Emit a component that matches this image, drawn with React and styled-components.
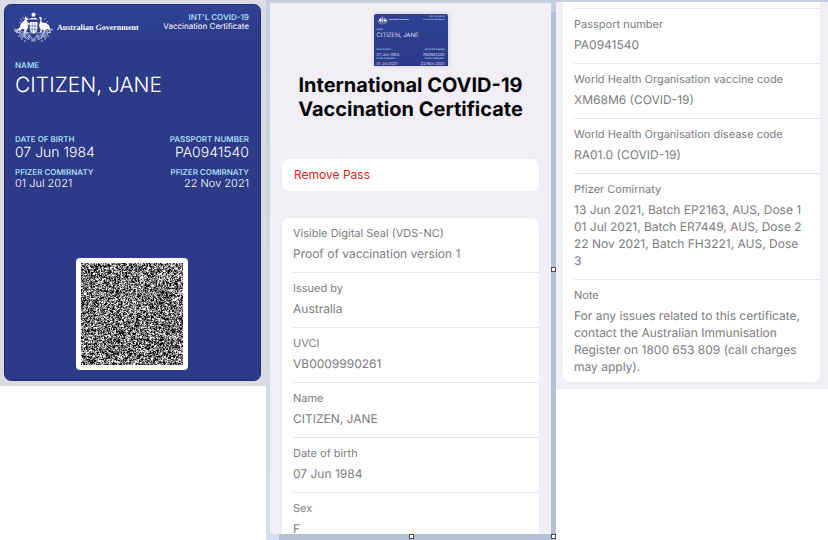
import React from "react";
import styled, { createGlobalStyle, css } from "styled-components";

const GlobalStyle = createGlobalStyle`
  * {
    box-sizing: border-box;
  }
  body {
    margin: 0;
    background: #ffffff;
    font-family: Inter, "Liberation Sans", sans-serif;
    text-rendering: geometricPrecision;
  }
  h1, dl, dd, p {
    margin: 0;
  }
`;

const Page = styled.main`
  display: grid;
  grid-template-columns: 266fr 290fr 272fr;
  align-items: start;
  height: 100vh;
  overflow: hidden;
`;

const PassPanel = styled.section`
  padding: 4px 5px 5px 4px;
  background: #dddbe2;
`;

const Pass = styled.article`
  display: flex;
  flex-direction: column;
  padding: 7px 11px 10px 10px;
  border: 1px solid #202b73;
  border-radius: 7px;
  background: linear-gradient(#2f4194, #2c3a88 48px);
  color: #ffffff;

  ${({ $mini }) => $mini && css`
    width: 74px;
    height: 52px;
    padding: 2px 3px 0;
    border: none;
    border-radius: 2px 2px 0 0;
    overflow: hidden;
    box-shadow: 0 0 4px #c9c7d2;
  `}
`;

const PassHeader = styled.header`
  display: flex;
  align-items: flex-start;
  height: ${({ $mini }) => ($mini ? "15px" : "48px")};
`;

const Crest = styled.svg`
  flex: none;
  width: ${({ $mini }) => ($mini ? "11px" : "41px")};
  height: ${({ $mini }) => ($mini ? "9px" : "30px")};
  margin-left: ${({ $mini }) => ($mini ? "0" : "-2px")};
`;

const Issuer = styled.span`
  flex: 1;
  margin-left: ${({ $mini }) => ($mini ? "1px" : "3px")};
  font: 700 8px/32px "Liberation Serif", serif;
  white-space: nowrap;

  ${({ $mini }) => $mini && css`
    font-size: 2px;
    line-height: 9px;
  `}
`;

const PassTitle = styled.div`
  display: flex;
  flex-direction: column;
  text-align: right;
  font-size: ${({ $mini }) => ($mini ? "2px" : "8px")};
  line-height: ${({ $mini }) => ($mini ? "3px" : "9px")};
  white-space: nowrap;
`;

const FieldRow = styled.div`
  display: flex;
  justify-content: space-between;
  margin-bottom: ${({ $gap = 0 }) => $gap}px;
`;

const Caption = styled.span`
  color: #a9dcf5;
  font-size: ${({ $mini }) => ($mini ? "2px" : "8px")};
  font-weight: 600;
  line-height: ${({ $mini }) => ($mini ? "3px" : "10px")};
`;

const fieldSizes = {
  large: css`
    font-size: 21px;
    line-height: 32px;
  `,
  medium: css`
    font-size: 14px;
    line-height: 17px;
  `,
  small: css`
    font-size: 11px;
    line-height: 12px;
  `,
  miniLarge: css`
    font-size: 6px;
    line-height: 7px;
  `,
  mini: css`
    font-size: 4px;
    line-height: 5px;
  `,
};

const Field = styled.div`
  display: flex;
  flex-direction: column;
  text-align: ${({ $right }) => ($right ? "right" : "left")};

  strong {
    font-weight: 300;
    white-space: nowrap;
    ${({ $size }) => fieldSizes[$size]}
  }
`;

const CodeBox = styled.svg`
  align-self: center;
  width: 112px;
  height: 112px;
  margin-top: 69px;
  padding: 5px;
  border-radius: 4px;
  background: #ffffff;
`;

const Frame = styled.section`
  position: relative;
  height: 100vh;
  padding: 3px 5px 6px 4px;
  background: linear-gradient(#c5cfe1, #d6e1ef);
  overflow: hidden;
`;

const Sheet = styled.div`
  display: flex;
  flex-direction: column;
  height: 100%;
  padding: 11px 12px 0;
  background: #f1eef6;
  box-shadow: 9px 9px 0 #b3c0d5;
  overflow: hidden;
`;

const Thumb = styled.div`
  align-self: center;
`;

const Title = styled.h1`
  margin: 7px 0 38px;
  font-size: 20px;
  font-weight: 700;
  line-height: 24px;
  text-align: center;
  color: #050505;
`;

const RemoveButton = styled.button`
  flex: none;
  height: 32px;
  margin-bottom: 27px;
  padding: 0 12px;
  border: none;
  border-radius: 7px;
  background: #ffffff;
  color: #e2231a;
  font: 400 12px/16px Inter, sans-serif;
  text-align: left;
  cursor: pointer;
`;

const Details = styled.dl`
  flex: none;
  padding-left: 11px;
  border-radius: ${({ $continued }) => ($continued ? "0 0 7px 7px" : "7px 7px 0 0")};
  background: #ffffff;
`;

const DetailRow = styled.div`
  padding: 8px 12px 10px 0;
  border-bottom: 1px solid #e6e6e8;
  color: #7c7c80;

  &:last-child {
    padding-bottom: 7px;
    border-bottom: none;
  }

  dt {
    margin-bottom: 4px;
    font-size: 11px;
    line-height: 15px;
  }

  dd {
    font-size: 12px;
    line-height: 17px;
  }
`;

const RowEnd = styled.div`
  height: 7px;
  border-bottom: 1px solid #e6e6e8;
`;

const BackPanel = styled.section`
  padding: 0 8px 7px 7px;
  border-top: 2px solid #c5cfe1;
  background: #f1eef6;
`;

const Handle = styled.i`
  position: absolute;
  width: 5px;
  height: 5px;
  border: 1px solid #4a4a4a;
  background: #ffffff;
`;

const RightHandle = styled(Handle)`
  top: calc(50% - 3px);
  right: 0;
`;

const BottomHandle = styled(Handle)`
  bottom: 1px;
  left: calc(50% - 2px);
`;

const CornerHandle = styled(Handle)`
  right: 0;
  bottom: 1px;
`;

const CODE_SIZE = 137;

const getCodePath = () => {
  let seed = 20211;
  let path = "";
  for (let y = 0; y < CODE_SIZE; y++) {
    for (let x = 0; x < CODE_SIZE; x++) {
      seed = (seed * 16807) % 2147483647;
      if (seed / 2147483647 < 0.54) {
        path += `M${x} ${y}h1v1h-1z`;
      }
    }
  }
  return path;
};

const codePath = getCodePath();

const front = [
  { label: "Visible Digital Seal (VDS-NC)", value: "Proof of vaccination version 1" },
  { label: "Issued by", value: "Australia" },
  { label: "UVCI", value: "VB0009990261" },
  { label: "Name", value: "CITIZEN, JANE" },
  { label: "Date of birth", value: "07 Jun 1984" },
  { label: "Sex", value: "F" },
];

const back = [
  { label: "Passport number", value: "PA0941540" },
  { label: "World Health Organisation vaccine code", value: "XM68M6 (COVID-19)" },
  { label: "World Health Organisation disease code", value: "RA01.0 (COVID-19)" },
  {
    label: "Pfizer Comirnaty",
    value: [
      "13 Jun 2021, Batch EP2163, AUS, Dose 1",
      "01 Jul 2021, Batch ER7449, AUS, Dose 2",
      "22 Nov 2021, Batch FH3221, AUS, Dose 3",
    ],
  },
  {
    label: "Note",
    value:
      "For any issues related to this certificate, contact the Australian Immunisation Register on 1800 653 809 (call charges may apply).",
  },
];

const CoatOfArms = ({ mini }) => (
  <Crest $mini={mini} viewBox="0 0 41 30" aria-label="Coat of arms" role="img">
    <g fill="#ffffff">
      <path d="M20.5 0l.6 1.3 1.4-.4-.5 1.4 1.2.8-1.4.5.1 1.4-1.4-.8-1.4.8.1-1.4-1.4-.5 1.2-.8-.5-1.4 1.4.4z" />
      <path d="M17.3 6h6.4v1.4h-6.4z" />
      {/* kangaroo */}
      <path d="M12.4 4.2l1.2 1.5 1.8.8.2.9-1.8.6c.2 1.8 1 2.9 2.7 3.5l1.4-.5.2.9-2 .8-1.3-.2.3 3.6-1.6 1.8-.4 2.5h2.2v1h-4.3l.4-3.8-2.2-.6-2 .9-3.8 1.9-2.4.2 3.8-2 1.9-2.5c.7-3.2 2-5.8 4.8-7.1l.2-2.2z" />
      {/* emu */}
      <path d="M25.8 5.7l1.2-.9 1.3.4.5 1.2-.6 2.7 1.2 1.7c2.5-.6 5.4.4 6.8 2.9l1.4 4.5-2.6-1.1-2.6.6-.8 3.3h-1.1l.4-3.1-1.8-.3-1.2 3.4h-1.2l1-4c-1.7-1.6-2.1-3.7-1-5.7l.8-4.3z" />
      {/* shield */}
      <path d="M16.8 10h7.6v7.2c0 2.2-1.8 3.6-3.8 4.6-2-1-3.8-2.4-3.8-4.6z" />
    </g>
    <g fill="none" stroke="#2c3a88" strokeWidth=".5">
      <path d="M19.2 10.5v10M22 10.5v10M17 14h7.2M17 17.3h7.2" />
    </g>
    <g fill="none" stroke="#c3cae4" strokeWidth=".7">
      <path d="M7 7l2 2M6 10l2 1M10 5v2M33 6l-2 2M35 9l-2 2M16 8l1-1M25 8l-1-1" />
      <path d="M1 17c6 1 9 4 18 4M40 17c-6 1-9 4-18 4M3 21c5-2 8 3 14 2M38 21c-5-2-8 3-14 2M7 26c3-3 6 1 11-2M34 26c-3-3-6 1-11-2" />
      <path d="M10 20l3 7 4-4 3 6 4-6 4 4 3-7M14 28l3-3M27 28l-3-3M18 27h5" />
      <path d="M3 17l2 4 3-3M38 17l-2 4-3-3M6 22l4 3 2-4M35 22l-4 3-2-4" />
    </g>
    <g fill="#e6e9f5">
      {[[2, 18], [5, 17], [4, 20], [7, 21], [6, 24], [9, 23], [9, 27], [12, 24], [12, 29], [16, 27],
        [39, 18], [36, 17], [37, 20], [34, 21], [35, 24], [32, 23], [32, 27], [29, 24], [29, 29], [25, 27],
        [19, 29], [22, 29]].map(([x, y]) => <circle key={`${x}-${y}`} cx={x} cy={y} r=".7" />)}
    </g>
  </Crest>
);

const PassFields = ({ mini }) => (
  <>
    <PassHeader $mini={mini}>
      <CoatOfArms mini={mini} />
      <Issuer $mini={mini}>Australian Government</Issuer>
      <PassTitle $mini={mini}>
        <Caption $mini={mini}>INT'L COVID-19</Caption>
        <span>Vaccination Certificate</span>
      </PassTitle>
    </PassHeader>
    <FieldRow $gap={mini ? 10 : 32}>
      <Field $size={mini ? "miniLarge" : "large"}>
        <Caption $mini={mini}>NAME</Caption>
        <strong>CITIZEN, JANE</strong>
      </Field>
    </FieldRow>
    <FieldRow $gap={mini ? 1 : 6}>
      <Field $size={mini ? "mini" : "medium"}>
        <Caption $mini={mini}>DATE OF BIRTH</Caption>
        <strong>07 Jun 1984</strong>
      </Field>
      <Field $size={mini ? "mini" : "medium"} $right>
        <Caption $mini={mini}>PASSPORT NUMBER</Caption>
        <strong>PA0941540</strong>
      </Field>
    </FieldRow>
    <FieldRow>
      <Field $size={mini ? "mini" : "small"}>
        <Caption $mini={mini}>PFIZER COMIRNATY</Caption>
        <strong>01 Jul 2021</strong>
      </Field>
      <Field $size={mini ? "mini" : "small"} $right>
        <Caption $mini={mini}>PFIZER COMIRNATY</Caption>
        <strong>22 Nov 2021</strong>
      </Field>
    </FieldRow>
  </>
);

const DetailRows = ({ rows }) =>
  rows.map(({ label, value }) => (
    <DetailRow key={label}>
      <dt>{label}</dt>
      {[].concat(value).map((line) => <dd key={line}>{line}</dd>)}
    </DetailRow>
  ));

const App = () => {
  return (
    <>
      <GlobalStyle />
      <Page>
        <PassPanel>
          <Pass>
            <PassFields />
            <CodeBox viewBox={`0 0 ${CODE_SIZE} ${CODE_SIZE}`} role="img" aria-label="Certificate code">
              <path d={codePath} fill="#000000" />
            </CodeBox>
          </Pass>
        </PassPanel>

        <Frame>
          <Sheet>
            <Thumb>
              <Pass $mini>
                <PassFields mini />
              </Pass>
            </Thumb>
            <Title>International COVID-19<br />Vaccination Certificate</Title>
            <RemoveButton type="button">Remove Pass</RemoveButton>
            <Details>
              <DetailRows rows={front} />
            </Details>
          </Sheet>
          <RightHandle />
          <BottomHandle />
          <CornerHandle />
        </Frame>

        <BackPanel>
          <Details $continued>
            <RowEnd />
            <DetailRows rows={back} />
          </Details>
        </BackPanel>
      </Page>
    </>
  );
};

export default App;
